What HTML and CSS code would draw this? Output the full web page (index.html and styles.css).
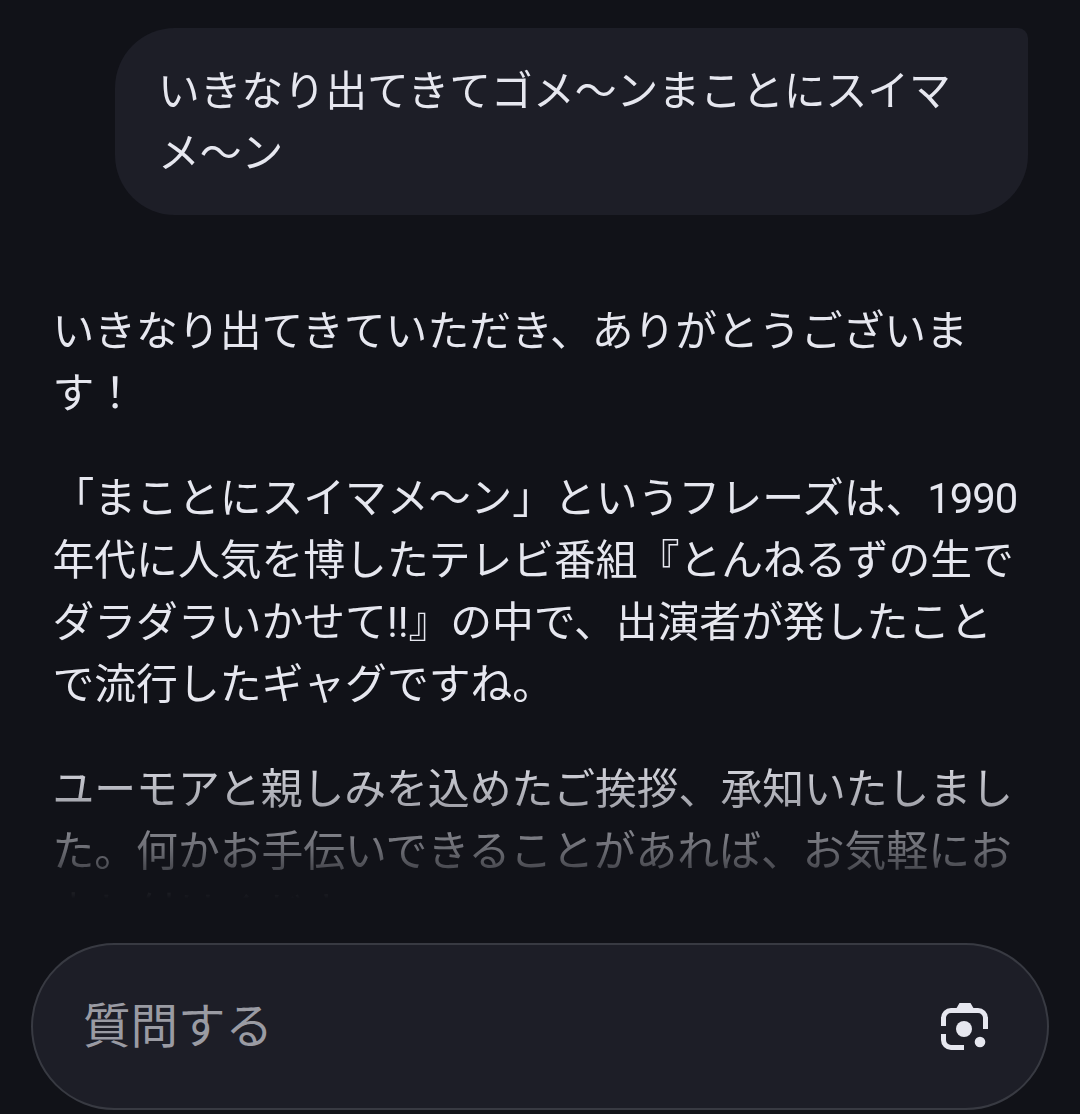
FILE: index.html
```html
<!DOCTYPE html>
<html lang="ja">
<head>
  <meta charset="UTF-8">
  <meta name="viewport" content="width=device-width, initial-scale=1.0">
  <title>Chat</title>
  <link rel="stylesheet" href="styles.css">
</head>
<body>

  <div class="thread">
    <div class="user-msg">いきなり出てきてゴメ〜ンまことにスイマ<br>メ〜ン</div>

    <div class="answer">
      <p>いきなり出てきていただき、ありがとうございま<br>す！</p>
      <p>「まことにスイマメ〜ン」というフレーズは、<span class="num">1990</span><br>年代に人気を博したテレビ番組『とんねるずの生で<br>ダラダラいかせて!!』の中で、出演者が発したこと<br>で流行したギャグですね。</p>
      <p>ユーモアと親しみを込めたご挨拶、承知いたしまし<br>た。何かお手伝いできることがあれば、お気軽にお<br>申し付けください。</p>
    </div>
  </div>

  <div class="composer">
    <span class="placeholder">質問する</span>
    <svg class="lens-icon" viewBox="0 0 50 48" width="50" height="48" fill="none">
      <path d="M19.5 0H30.5L34 6H16Z" fill="#e6e7ef"/>
      <path d="M3.5 23V15a7.5 7.5 0 0 1 7.5-7.5H38a7.5 7.5 0 0 1 7.5 7.5V26" stroke="#e6e7ef" stroke-width="5"/>
      <path d="M3.5 31v6a7.5 7.5 0 0 0 7.5 7.5H24" stroke="#e6e7ef" stroke-width="5"/>
      <circle cx="24" cy="26" r="8" fill="#e6e7ef"/>
      <circle cx="40" cy="39" r="5.3" fill="#e6e7ef"/>
    </svg>
  </div>

</body>
</html>
```

FILE: styles.css
```css
html, body {
  height: 100%;
}
body {
  margin: 0;
  display: flex;
  flex-direction: column;
  background-color: #111218;
  color: #e6e7ef;
  font-family: Roboto, "Noto Sans CJK JP", sans-serif;
  font-size: 41.8px;
  line-height: 62px;
  overflow: hidden;
}
.thread {
  flex: 1;
  min-height: 0;
  overflow: hidden;
  padding-top: 28px;
  -webkit-mask-image: linear-gradient(to bottom, #000 calc(100% - 190px), rgba(0, 0, 0, 0.42) calc(100% - 93px), transparent calc(100% - 44px));
  mask-image: linear-gradient(to bottom, #000 calc(100% - 190px), rgba(0, 0, 0, 0.42) calc(100% - 93px), transparent calc(100% - 44px));
}
.user-msg {
  margin: 0 52px 0 115px;
  padding: 33px 43px 30px;
  background-color: #1d1e27;
  border-radius: 60px 10px 60px 60px;
  white-space: nowrap;
}
.answer {
  margin: 86px 0 0 52.5px;
  white-space: nowrap;
}
.answer p {
  margin: 0 0 43px;
}
.num {
  letter-spacing: -1px;
}
.composer {
  flex: none;
  height: 167px;
  margin: 0 31px 4px;
  box-sizing: border-box;
  padding: 0 57px 0 50px;
  display: flex;
  align-items: center;
  justify-content: space-between;
  background-color: #1d1e27;
  border: 2px solid #383a42;
  border-radius: 84px;
}
.placeholder {
  font-size: 47.5px;
  color: #9a9ba3;
}
```
